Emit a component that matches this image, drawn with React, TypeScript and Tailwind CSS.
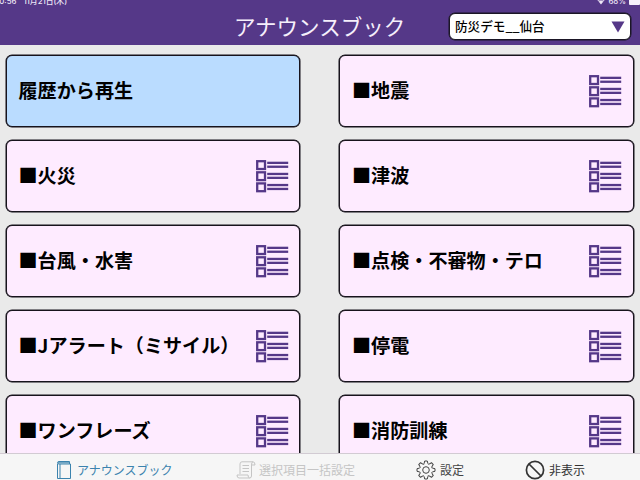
import clsx from "clsx"
import React from "react"

type Category = {
  title: string
  history?: boolean
}

const categories: Category[] = [
  { title: "履歴から再生", history: true },
  { title: "■地震" },
  { title: "■火災" },
  { title: "■津波" },
  { title: "■台風・水害" },
  { title: "■点検・不審物・テロ" },
  { title: "■Jアラート（ミサイル）" },
  { title: "■停電" },
  { title: "■ワンフレーズ" },
  { title: "■消防訓練" },
]

const ListIcon = () => (
  <svg width="33" height="33" viewBox="0 0 33 33" className="shrink-0 text-[#553888]" aria-hidden="true">
    {[0, 11.1, 22.2].map((y) => (
      <g key={y} transform={`translate(0 ${y})`}>
        <rect x="1.2" y="1.2" width="7.8" height="7.8" fill="none" stroke="currentColor" strokeWidth="2.3" />
        <rect x="11.2" y="1.7" width="21" height="2.3" fill="currentColor" />
        <rect x="11.2" y="5.6" width="21" height="2.3" fill="currentColor" />
      </g>
    ))}
  </svg>
)

const BookIcon = () => (
  <svg width="16" height="20" viewBox="0 0 16 20" fill="none" stroke="currentColor" aria-hidden="true">
    <path d="M1.5 3.8V18.5H14.5V4H3Q1.5 4 1.5 2.8Q1.5 1.5 3 1.5H13.5V4M2 2.8H13.5M4 4V18.5" />
  </svg>
)

const ScrollIcon = () => (
  <svg width="20" height="20" viewBox="0 0 20 20" fill="none" stroke="currentColor" aria-hidden="true">
    <path d="M4 14V4Q4 1.8 6 1.8H17Q19 1.8 19 5H15.5V16Q15.5 18 13.5 18H3Q1 18 1 15H12Q12 18 13.7 18M15.5 5Q15.5 1.8 17 1.8M6.5 5.5H13M6.5 8.5H13M6.5 11.5H13" />
  </svg>
)

const TOOTH = "M8.1 3.6L8.7 1H11.3L11.9 3.6"

// outline runs around eight rounded teeth
const GearIcon = () => (
  <svg width="20" height="20" viewBox="0 0 20 20" fill="none" stroke="currentColor" strokeLinejoin="round" aria-hidden="true">
    {[0, 45, 90, 135, 180, 225, 270, 315].map((angle) => (
      <path key={angle} d={`${TOOTH}Q12.5 4.5 13.2 4.1`} transform={`rotate(${angle} 10 10)`} />
    ))}
    <circle cx="10" cy="10" r="3.3" />
  </svg>
)

const BanIcon = () => (
  <svg width="20" height="20" viewBox="0 0 20 20" fill="none" stroke="currentColor" strokeWidth="1.7" aria-hidden="true">
    <circle cx="10" cy="10" r="8.6" />
    <path d="M4 4L16 16" />
  </svg>
)

const StatusBar = () => (
  <div className="-mt-[4px] flex h-[10px] items-center justify-between font-['Inter','Noto_Sans_CJK_JP',sans-serif] text-[7.8px] leading-[10px] font-medium text-[#eee7f6]">
    <div className="-ml-[4px] flex gap-[7px]">
      <span>10:56</span>
      <span>11月21日(木)</span>
    </div>
    <div className="flex items-center">
      <svg width="8" height="8" viewBox="0 0 8 8" className="mr-[3px]" aria-hidden="true">
        <path d="M.4 3Q4 0 7.6 3L4 7.4Z" fill="currentColor" />
        <path d="M1.2 4.2Q4 2 6.8 4.2" stroke="#553888" strokeWidth=".6" fill="none" />
      </svg>
      <span>68%</span>
      <span className="ml-[3px] h-[8px] w-[11px] rounded-[1px] bg-[#f5f0fb]" />
    </div>
  </div>
)

const Header = () => (
  <header className="h-[45px] shrink-0 bg-[#553888]">
    <StatusBar />
    <div className="grid grid-cols-[234px_215px_182px] pt-[6px]">
      <h1 className="col-start-2 text-[21.5px] leading-[27px] whitespace-nowrap text-[#f5effb]">
        アナウンスブック
      </h1>
      <button className="mt-[1px] flex h-[27px] items-center justify-between rounded-[6px] border border-[#1b1626] bg-white pr-[5px] pl-[5px] text-[12.6px] font-medium text-black shadow-[0_0_0_0.5px_#1b1626]">
        <span>防災デモ__仙台</span>
        <svg width="14" height="12" viewBox="0 0 14 12" aria-hidden="true">
          <path d="M.5 .5H13.5L7 11.5Z" fill="#553888" />
        </svg>
      </button>
    </div>
  </header>
)

const CategoryCard = ({ title, history }: Category) => (
  <button
    className={clx(
      "flex h-[72px] items-center justify-between rounded-[6px] border border-[#17131c] pr-[10.5px] pl-[12px] text-left text-[19.1px] leading-none font-bold text-black shadow-[0_0_0_0.5px_#17131c]",
      history ? "bg-[#badcff]" : "bg-[#feebff]"
    )}
  >
    <span className="whitespace-nowrap">{title}</span>
    {!history && <ListIcon />}
  </button>
)

const clx = clsx

type TabProps = {
  icon: React.ReactNode
  label: string
  className?: string
}

const Tab = ({ icon, label, className }: TabProps) => (
  <button className={clx("flex items-center whitespace-nowrap", className)}>
    {icon}
    <span>{label}</span>
  </button>
)

const App = () => {
  return (
    <div className="flex h-[480px] w-[640px] flex-col overflow-hidden bg-[#eaeaea] font-['Noto_Sans_CJK_JP',sans-serif]">
      <Header />
      <main className="grid min-h-0 flex-1 auto-rows-[72px] grid-cols-[294.5px_294.5px] gap-x-[39px] gap-y-[13px] overflow-hidden pt-[10px] pl-[5.5px]">
        {categories.map((category) => (
          <CategoryCard key={category.title} {...category} />
        ))}
      </main>
      <nav className="flex h-[27px] shrink-0 border-t border-[#d2cbd3] bg-[#f6f6f6] pt-[6px] text-[12px] leading-[20px]">
        <Tab icon={<BookIcon />} label="アナウンスブック" className="ml-[56px] w-[180px] gap-[5px] text-[#3b83ae]" />
        <Tab icon={<ScrollIcon />} label="選択項目一括設定" className="w-[180px] gap-[3px] text-[#c5c5c5]" />
        <Tab icon={<GearIcon />} label="設定" className="w-[109px] gap-[4px] text-[#444]" />
        <Tab icon={<BanIcon />} label="非表示" className="gap-[4px] text-[#333]" />
      </nav>
    </div>
  )
}

export default App
